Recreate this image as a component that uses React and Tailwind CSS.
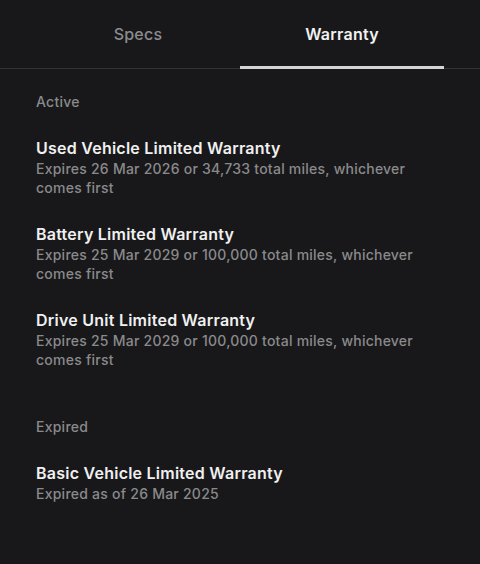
import React, { useState } from 'react';

const sections = [
  {
    label: 'Active',
    items: [
      { title: 'Used Vehicle Limited Warranty', detail: 'Expires 26 Mar 2026 or 34,733 total miles, whichever comes first' },
      { title: 'Battery Limited Warranty', detail: 'Expires 25 Mar 2029 or 100,000 total miles, whichever comes first' },
      { title: 'Drive Unit Limited Warranty', detail: 'Expires 25 Mar 2029 or 100,000 total miles, whichever comes first' },
    ],
  },
  {
    label: 'Expired',
    items: [
      { title: 'Basic Vehicle Limited Warranty', detail: 'Expired as of 26 Mar 2025' },
    ],
  },
];

export default function App() {
  const [tab, setTab] = useState('Warranty');

  return (
    <div className="min-h-[564px] w-[480px] bg-[#18181a] font-['Inter',sans-serif] antialiased tracking-[0.015em]">
      {/* Tabs */}
      <div className="border-b border-[#333335] px-[36px]">
        <div className="flex">
          {['Specs', 'Warranty'].map((t) => (
            <button
              key={t}
              onClick={() => setTab(t)}
              className={`relative h-[68px] flex-1 text-[16px] ${
                tab === t ? 'font-semibold text-[#f2f2f2]' : 'font-medium text-[#8c8c8e]'
              }`}
            >
              {t}
              {tab === t && (
                <span className="absolute bottom-[-1px] left-0 right-0 h-[3px] bg-[#d4d4d6]" />
              )}
            </button>
          ))}
        </div>
      </div>

      {/* Warranty list */}
      <div className="px-[36px] pt-[23px]">
        {sections.map((section, i) => (
          <div key={section.label} className={i > 0 ? 'mt-[48px]' : ''}>
            <p className="text-[14px] leading-[20px] font-medium text-[#8a8a8c]">{section.label}</p>
            <div className="mt-[25px] flex flex-col gap-[26px]">
              {section.items.map((item) => (
                <div key={item.title} className="max-w-[408px]">
                  <h3 className="text-[16px] leading-[22px] font-semibold text-[#f0f0f0]">{item.title}</h3>
                  <p className="text-[14px] leading-[19px] font-medium text-[#8a8a8c]">{item.detail}</p>
                </div>
              ))}
            </div>
          </div>
        ))}
      </div>
    </div>
  );
}
